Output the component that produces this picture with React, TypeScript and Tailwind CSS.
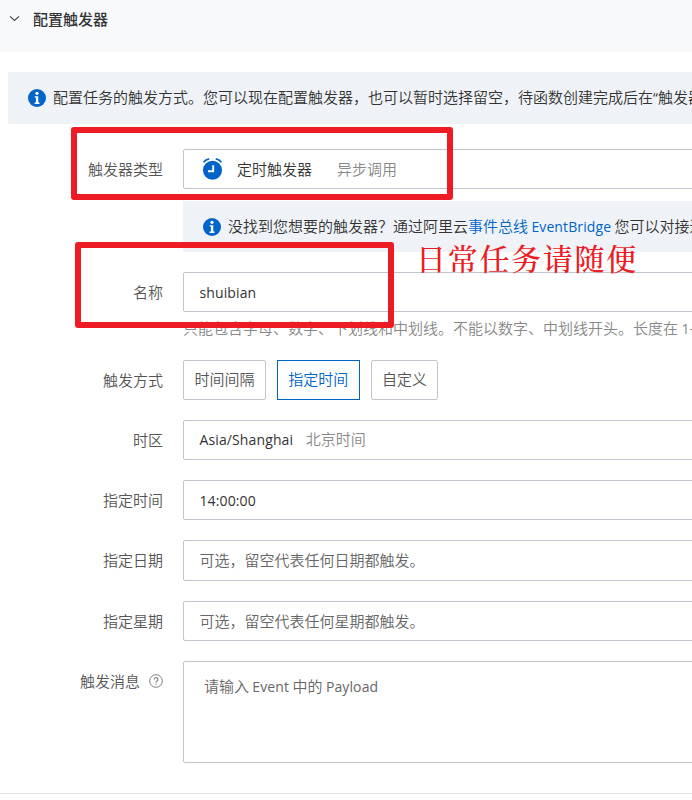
import React from "react";
import clsx from "clsx";

const IconInfo = () => (
  <svg className="shrink-0" width="18" height="18" viewBox="0 0 18 18">
    <circle cx="9" cy="9" r="9" fill="#0064c8" />
    <circle cx="9" cy="4.3" r="1.6" fill="#fff" />
    <path d="M6.7 7.2h3.6v6.3h1.2v1.4H6.6v-1.4h1.3V8.6H6.7z" fill="#fff" />
  </svg>
);

const IconAlarm = () => (
  <svg className="-mt-px shrink-0" width="19" height="22" viewBox="0 0 19 22">
    <circle cx="9.5" cy="12.3" r="9.5" fill="#0064c8" />
    <path
      d="M.6 4.2Q2.8 1.4 6.2.9M18.4 4.2Q16.2 1.4 12.8.9"
      fill="none"
      stroke="#0064c8"
      strokeWidth="1.7"
    />
    <path d="M10.2 7.2v6H5" fill="none" stroke="#fff" strokeWidth="1.9" />
  </svg>
);

const IconHelp = () => (
  <svg width="14" height="14" viewBox="0 0 14 14" fill="none" stroke="#808080">
    <circle cx="7" cy="7" r="6.3" />
    <path d="M5.1 5.6a1.9 1.9 0 1 1 2.8 1.7q-.9.5-.9 1.3" strokeWidth="1.2" />
    <path d="M7 9.6v1.2" strokeWidth="1.2" />
  </svg>
);

type RowProps = {
  label: React.ReactNode;
  className?: string;
  children: React.ReactNode;
};

const Row: React.FC<RowProps> = ({ label, className, children }) => (
  <div className={clsx("flex", className)}>
    <div className="flex h-10 w-[163px] shrink-0 items-center justify-end text-[#555]">
      {label}
    </div>
    <div className="ml-5 w-[560px] shrink-0">{children}</div>
  </div>
);

const Field: React.FC<{ className?: string; children: React.ReactNode }> = ({
  className = "h-10 pl-[15.5px] text-[#333]",
  children,
}) => (
  <div
    className={clsx(
      "flex items-center rounded-xs border border-[#c0c6cc] bg-white",
      className
    )}
  >
    {children}
  </div>
);

// latin glyphs sit next to the Chinese ones, slightly smaller
const Latin: React.FC<{ children: React.ReactNode }> = ({ children }) => (
  <span className="font-['Open_Sans','Noto_Sans_CJK_SC',sans-serif] text-[14px] font-normal tracking-[0.12px]">
    {children}
  </span>
);

const modes = ["时间间隔", "指定时间", "自定义"];

const App: React.FC = () => {
  const [mode, setMode] = React.useState("指定时间");

  return (
    <div className="relative h-[800px] w-full overflow-hidden whitespace-nowrap bg-white font-['Noto_Sans_CJK_SC',sans-serif] text-[15px] leading-5 font-[350] text-[#333]">
      <div className="flex h-[52px] items-start bg-[#f7f9fb] pt-[9px] pl-[9px]">
        <svg
          className="mt-1"
          width="11"
          height="11"
          viewBox="0 0 11 11"
          fill="none"
          stroke="#444"
          strokeWidth="1.1"
        >
          <path d="M1 3.3l4.5 4.2L10 3.3" />
        </svg>
        <h2 className="ml-[13px] font-medium">配置触发器</h2>
      </div>

      <div className="mt-5 ml-2 flex h-[52px] w-[800px] items-center rounded-xs bg-[#eff3f8] pl-5">
        <IconInfo />
        <span className="-mt-0.5 ml-[7px]">
          配置任务的触发方式。您可以现在配置触发器，也可以暂时选择留空，待函数创建完成后在
          <Latin>“</Latin>触发器
        </span>
      </div>

      <Row label="触发器类型" className="mt-[25px]">
        <Field className="h-10 pl-[19px]">
          <IconAlarm />
          <span className="ml-[15px]">定时触发器</span>
          <span className="ml-[25px] text-[#888]">异步调用</span>
        </Field>
        <div className="mt-3 flex h-[51px] items-center bg-[#eff3f8] pl-5">
          <IconInfo />
          <span className="ml-[7px]">
            没找到您想要的触发器？通过阿里云
            <a className="text-[#0064c8]">
              事件总线 <Latin>EventBridge</Latin>
            </a>{" "}
            您可以对接近
          </span>
        </div>
      </Row>

      <Row label="名称" className="mt-5">
        <Field className="h-10 pt-0.5 pl-[15.5px]">
          <Latin>shuibian</Latin>
        </Field>
        <p className="mt-1.5 text-[#888]">
          只能包含字母、数字、下划线和中划线。不能以数字、中划线开头。长度在{" "}
          <Latin>1-64</Latin>
        </p>
      </Row>

      <Row label="触发方式" className="mt-[21px]">
        <div className="flex gap-[11px]">
          {modes.map((item) => (
            <button
              key={item}
              onClick={() => setMode(item)}
              className={clsx(
                "h-10 border px-[10.4px] pb-0.5",
                item === mode
                  ? "border-[#0064c8] text-[#0064c8]"
                  : "rounded-xs border-[#c0c6cc] text-[#555]"
              )}
            >
              {item}
            </button>
          ))}
        </div>
      </Row>

      <Row label="时区" className="mt-5">
        <Field>
          <Latin>Asia/Shanghai</Latin>
          <span className="-mt-0.5 ml-[12.5px] text-[#888]">北京时间</span>
        </Field>
      </Row>

      <Row label="指定时间" className="mt-5">
        <Field className="h-10 pt-0.5 pl-[15.5px]">
          <Latin>14:00:00</Latin>
        </Field>
      </Row>

      <Row label="指定日期" className="mt-5">
        <Field className="h-[41px] pb-0.5 pl-[15.5px] text-[#666]">
          可选，留空代表任何日期都触发。
        </Field>
      </Row>

      <Row label="指定星期" className="mt-5">
        <Field className="h-10 pl-[15.5px] text-[#666]">
          可选，留空代表任何星期都触发。
        </Field>
      </Row>

      <Row
        label={
          <>
            <span className="mr-[9px]">触发消息</span>
            <IconHelp />
          </>
        }
        className="mt-5"
      >
        <div className="h-[102px] rounded-xs border border-[#c0c6cc] px-5 py-3.5 text-[#666]">
          请输入 <Latin>Event</Latin> 中的 <Latin>Payload</Latin>
        </div>
      </Row>

      <div className="mt-[30px] border-t border-[#e3e4e6]" />

      {/* annotations */}
      <div className="absolute top-[127px] left-[71px] h-[73px] w-[382px] rounded-[3px] border-6 border-[#ed1c24]" />
      <div className="absolute top-[242px] left-[75px] h-[86px] w-[319px] rounded-[3px] border-6 border-[#ed1c24]" />
      <div className="absolute top-[237px] left-[416px] font-['Noto_Serif_CJK_SC','Noto_Sans_CJK_SC',serif] text-[30px] leading-10 font-medium tracking-[1.7px] text-[#ed1c24]">
        日常任务请随便
      </div>
    </div>
  );
};

export default App;
